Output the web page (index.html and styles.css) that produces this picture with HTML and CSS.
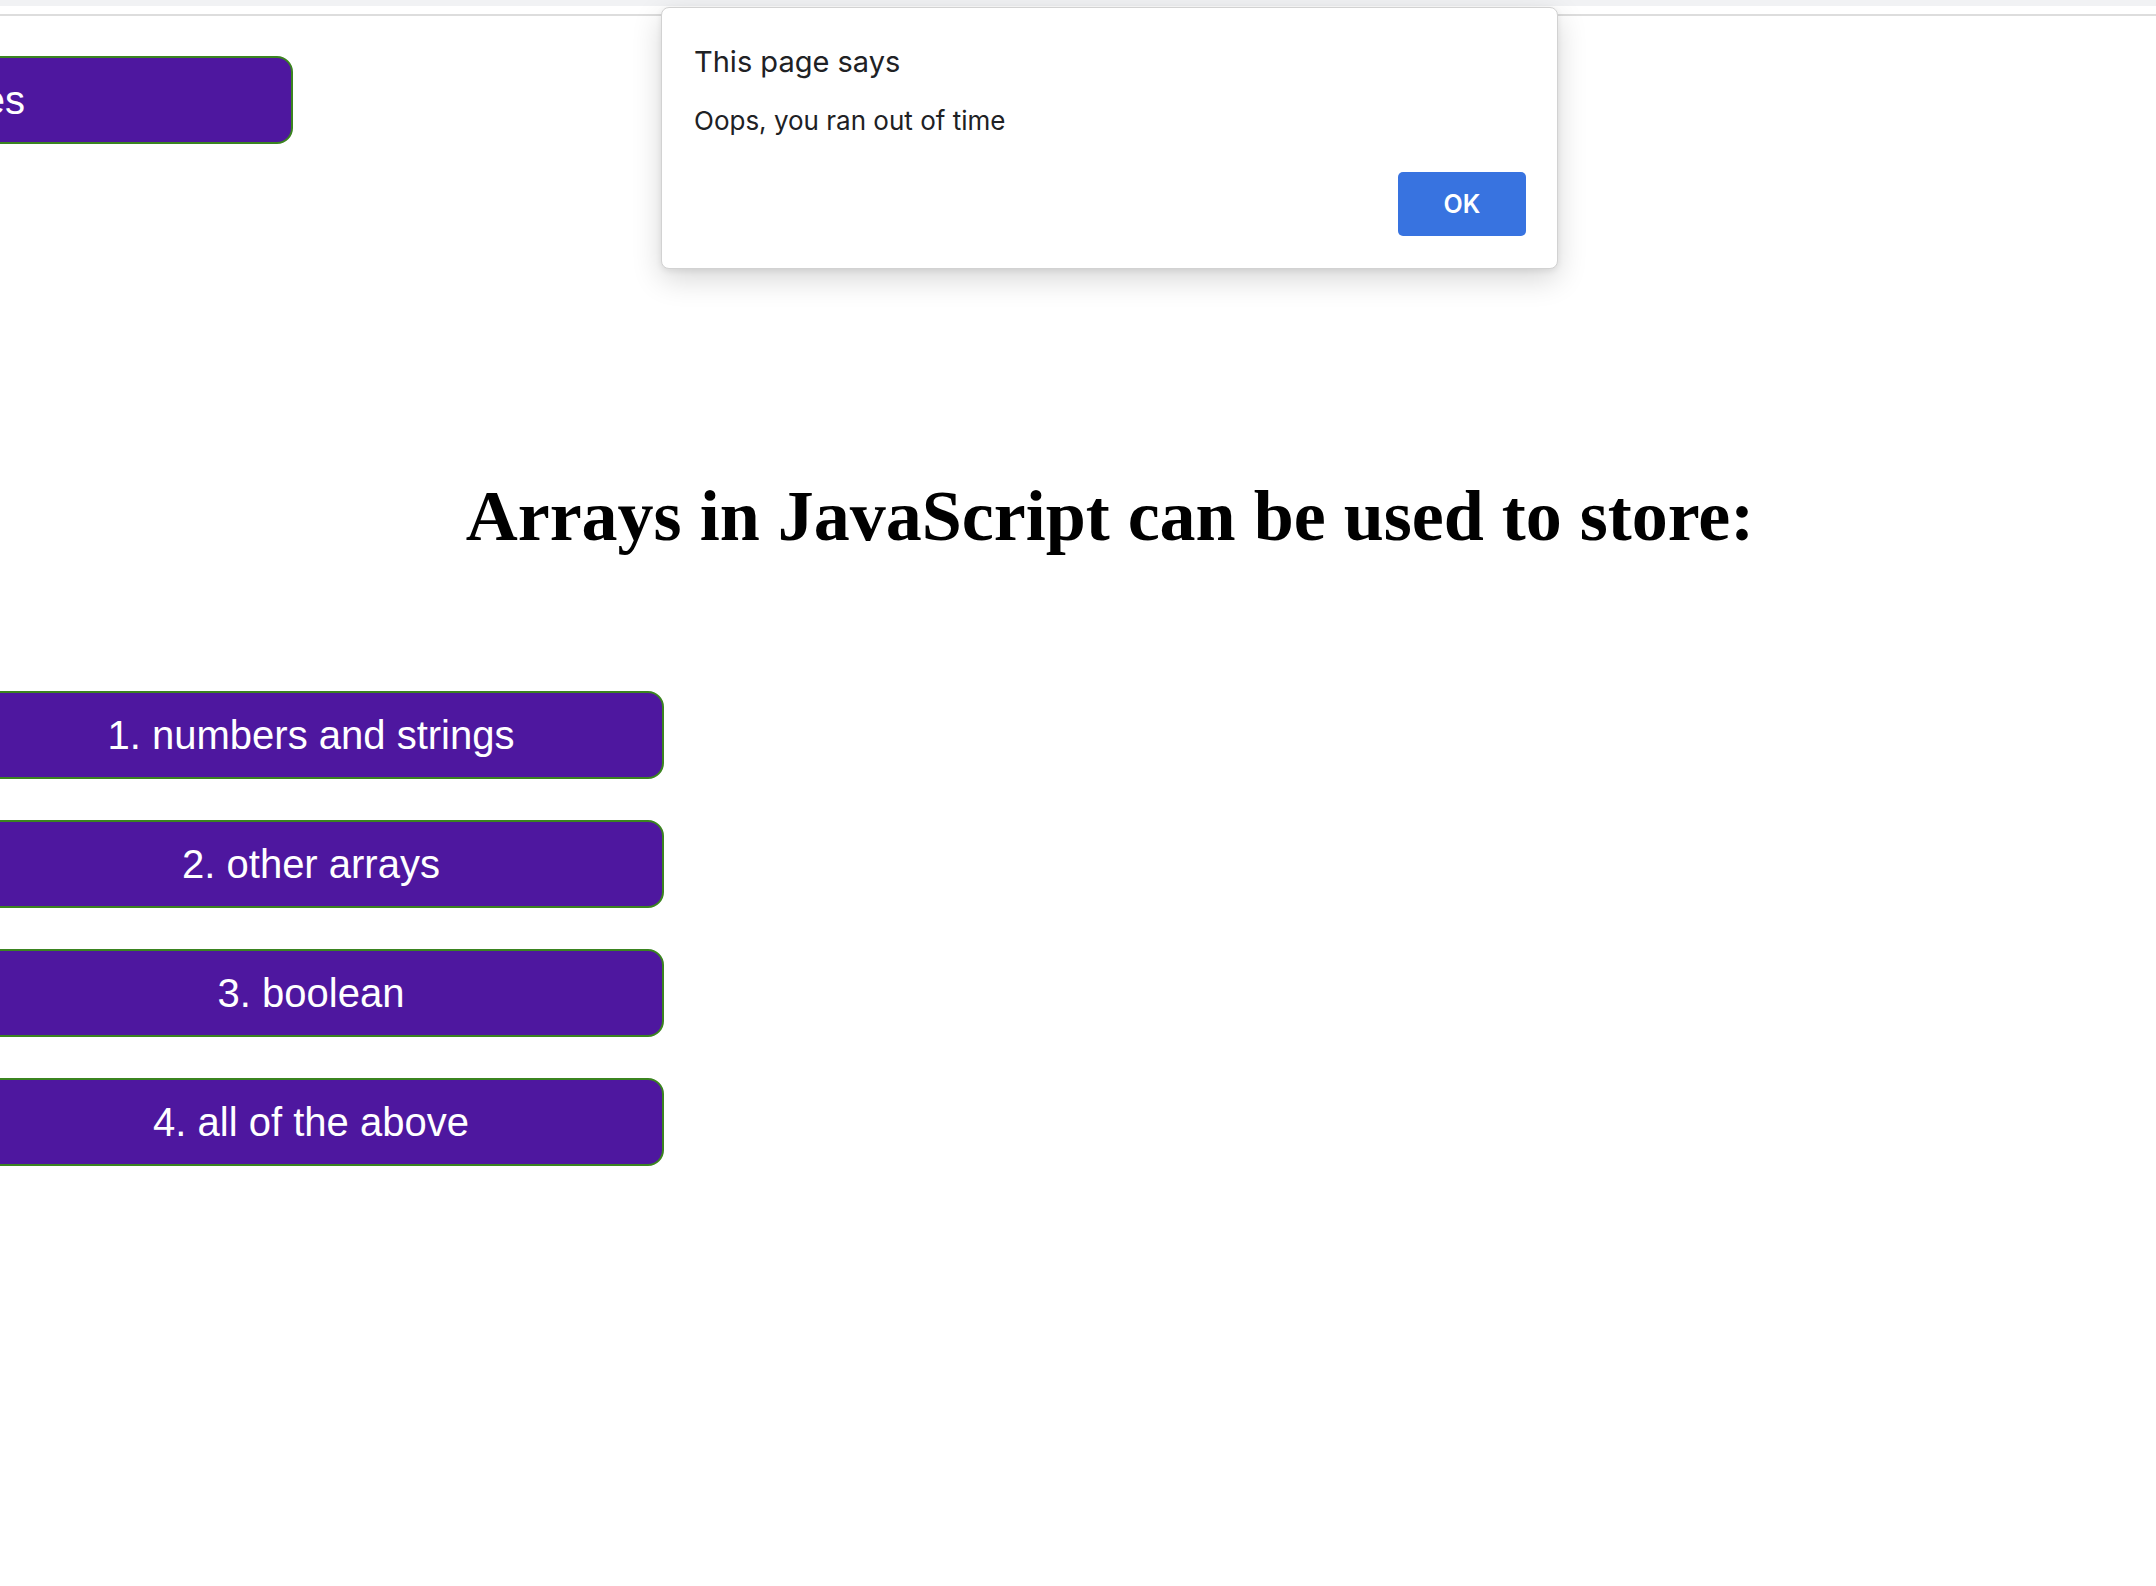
FILE: index.html
```html
<!DOCTYPE html>
<html lang="en">
<head>
<meta charset="utf-8">
<title>Code Quiz</title>
<link rel="stylesheet" href="styles.css">
</head>
<body>
<div class="browserbar"><div class="tabstrip"></div><div class="toolbar"></div></div>
<header class="header">
  <button class="hs-btn">View Highscores</button>
</header>
<main class="main">
  <h1 class="question">Arrays in JavaScript can be used to store:</h1>
  <div class="answers">
    <button class="answer">1. numbers and strings</button>
    <button class="answer">2. other arrays</button>
    <button class="answer">3. boolean</button>
    <button class="answer">4. all of the above</button>
  </div>
</main>
<div class="dialog" role="alertdialog">
  <div class="dialog-title">This page says</div>
  <div class="dialog-msg">Oops, you ran out of time</div>
  <div class="dialog-actions"><button class="ok-btn">OK</button></div>
</div>
</body>
</html>
```

FILE: styles.css
```css
html, body {
  margin: 0;
  padding: 0;
  background: #ffffff;
}
body {
  width: 2156px;
  height: 1586px;
  overflow: hidden;
  position: relative;
  font-family: "Liberation Sans", Arial, sans-serif;
}
.browserbar {
  height: 16px;
}
.tabstrip {
  height: 6px;
  background: #f1f2f4;
}
.toolbar {
  height: 8px;
  background: #ffffff;
  border-bottom: 2px solid #dddddd;
}
.header {
  padding-top: 40px;
  display: flex;
}
.hs-btn {
  margin-left: -555px;
  width: 848px;
  height: 88px;
  box-sizing: border-box;
  border: 2px solid #3b8420;
  border-radius: 16px;
  background: #4e179f;
  color: #ffffff;
  font-family: "Liberation Sans", Arial, sans-serif;
  font-size: 40px;
  display: flex;
  align-items: center;
  justify-content: flex-end;
  padding: 0 266px 0 0;
}
.main {
  margin-left: -40px;
  width: 2300px;
}
.question {
  margin: 335px 0 0 0;
  font-family: "Liberation Serif", "Times New Roman", serif;
  font-weight: bold;
  font-size: 72px;
  line-height: 74px;
  text-align: center;
  color: #000000;
}
.answers {
  margin-top: 138px;
  display: flex;
  flex-direction: column;
  gap: 41px;
}
.answer {
  width: 704px;
  height: 88px;
  box-sizing: border-box;
  border: 2px solid #3b8420;
  border-radius: 16px;
  background: #4e179f;
  color: #ffffff;
  font-family: "Liberation Sans", Arial, sans-serif;
  font-size: 40px;
  padding: 0 2px 0 0;
  display: flex;
  align-items: center;
  justify-content: center;
}
.dialog {
  position: absolute;
  left: 661px;
  top: 7px;
  width: 897px;
  box-sizing: border-box;
  background: #ffffff;
  border: 1px solid #d2d2d2;
  border-radius: 8px;
  box-shadow: 0 10px 30px rgba(0, 0, 0, 0.16), 0 2px 6px rgba(0, 0, 0, 0.08);
  padding: 37px 31px 32px 32px;
  font-family: Inter, "Noto Sans", sans-serif;
  color: #202124;
}
.dialog-title {
  font-size: 29px;
  line-height: 34px;
}
.dialog-msg {
  margin-top: 26px;
  font-size: 26px;
  line-height: 31px;
}
.dialog-actions {
  margin-top: 36px;
  display: flex;
  justify-content: flex-end;
}
.ok-btn {
  width: 128px;
  height: 64px;
  border: none;
  border-radius: 5px;
  background: #3873e0;
  color: #ffffff;
  font-family: Inter, "Noto Sans", sans-serif;
  font-weight: 600;
  font-size: 25px;
  padding: 0;
}
```
